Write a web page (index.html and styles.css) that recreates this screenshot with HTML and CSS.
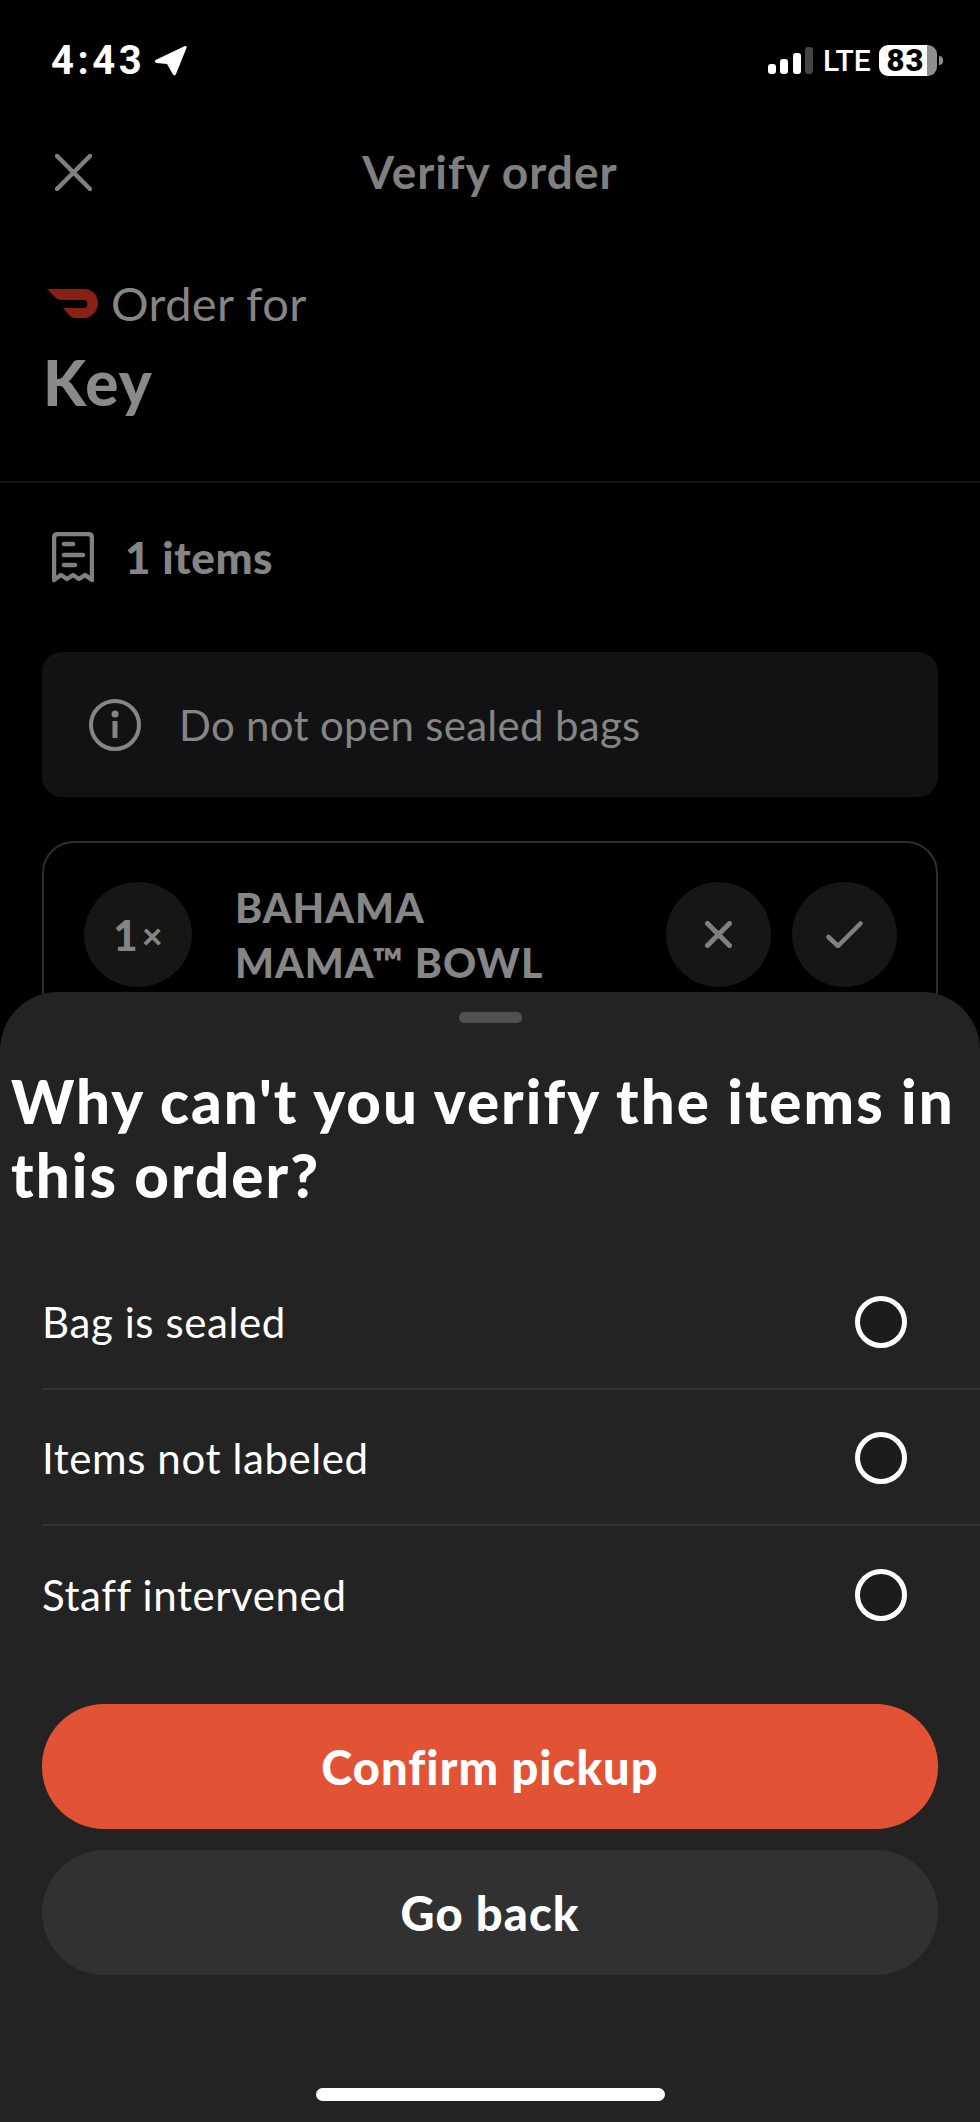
FILE: index.html
```html
<!DOCTYPE html>
<html lang="en">
<head>
    <meta charset="UTF-8">
    <meta name="viewport" content="width=device-width, initial-scale=1.0">
    <title>Verify order</title>
    <link rel="stylesheet" href="styles.css">
</head>
<body>
    <div class="screen">
        <div class="status-bar">
            <div class="status-left">
                <span class="time">4:43</span>
                <svg class="location" width="33" height="31" viewBox="0 0 33 31"><path d="M31 1 1.500 15Q0 17 2.500 18L13 19 19 29.500Q21 31.500 22 29L32.500 3Q33 .5 31 1Z" fill="#fff"/></svg>
            </div>
            <div class="status-right">
                <svg width="45" height="27" viewBox="0 0 45 27">
                    <rect x="0" y="17" width="8" height="10" rx="3" fill="#fff"/>
                    <rect x="12" y="12" width="8" height="15" rx="3" fill="#fff"/>
                    <rect x="25" y="6" width="8" height="21" rx="3" fill="#fff"/>
                    <rect x="37" y="0" width="8" height="27" rx="3" fill="#444"/>
                </svg>
                <span class="network">LTE</span>
                <div class="battery"><span>83</span></div>
                <div class="battery-nub"></div>
            </div>
        </div>

        <div class="nav">
            <svg class="nav-close" width="37" height="37" viewBox="0 0 37 37"><path d="M2 2 35 35M35 2 2 35" stroke="#808080" stroke-width="4.500" stroke-linecap="round"/></svg>
            <h1>Verify order</h1>
        </div>

        <div class="order-for">
            <div class="order-for-line">
                <svg width="51" height="30" viewBox="0 0 51 30"><path d="M0 1H37C45 1 51 7 51 15C51 23 45 30 37 30H27Q24 30 22 27L16 20H38C41 20 41 12 38 12H14Q11 12 9 10Z" fill="#8a2014"/></svg>
                <span>Order for</span>
            </div>
            <div class="customer">Key</div>
        </div>

        <div class="items">
            <div class="items-head">
                <svg width="42" height="51" viewBox="0 0 42 51" fill="none" stroke="#808080" stroke-width="4.500" stroke-linecap="round" stroke-linejoin="round">
                    <path d="M2 48V6Q2 2 6 2H36Q40 2 40 6V48L33 43 27 47 21 43 15 47 9 43Z"/>
                    <path d="M12 12H21M12 23H31M12 33H23"/>
                </svg>
                <span>1 items</span>
            </div>

            <div class="notice">
                <svg width="52" height="52" viewBox="0 0 52 52" fill="none" stroke="#858585">
                    <circle cx="26" cy="26" r="24" stroke-width="4"/>
                    <path d="M26 22V39" stroke-width="5"/>
                    <circle cx="26" cy="15" r="3.500" fill="#858585" stroke="none"/>
                </svg>
                <span>Do not open sealed bags</span>
            </div>

            <div class="item-card">
                <div class="round-btn qty"><span class="qty-num">1</span><span class="qty-x">×</span></div>
                <div class="item-name">BAHAMA<br>MAMA™ BOWL</div>
                <div class="round-btn">
                    <svg width="27" height="27" viewBox="0 0 27 27"><path d="M2.500 2.500 24.500 24.500M24.500 2.500 2.500 24.500" stroke="#808080" stroke-width="5" stroke-linecap="round"/></svg>
                </div>
                <div class="round-btn">
                    <svg width="37" height="27" viewBox="0 0 37 27" fill="none"><path d="M2.500 16 12 25 34.500 2.500" stroke="#808080" stroke-width="4.500" stroke-linecap="round" stroke-linejoin="round"/></svg>
                </div>
            </div>
        </div>

        <!-- bottom sheet lies over the page -->
        <div class="sheet">
            <div class="sheet-handle"></div>
            <h2>Why can't you verify the items in this order?</h2>
            <div class="reasons">
                <div class="reason">
                    <span>Bag is sealed</span>
                    <div class="radio"></div>
                </div>
                <div class="reason">
                    <span>Items not labeled</span>
                    <div class="radio"></div>
                </div>
                <div class="reason">
                    <span>Staff intervened</span>
                    <div class="radio"></div>
                </div>
            </div>
            <div class="actions">
                <button class="btn btn-primary" type="button">Confirm pickup</button>
                <button class="btn btn-secondary" type="button">Go back</button>
            </div>
            <div class="home-indicator"></div>
        </div>
    </div>
</body>
</html>
```

FILE: styles.css
```css
/* Reset some default browser styles */
* {
    margin: 0;
    padding: 0;
    box-sizing: border-box;
}

body {
    background: #000;
    font-family: 'Lato', 'Liberation Sans', sans-serif;
}

.screen {
    position: relative;
    width: 980px;
    height: 2122px;
    overflow: hidden;
    background: #000;
}

/* Status bar */
.status-bar {
    display: flex;
    justify-content: space-between;
    align-items: center;
    height: 120px;
    padding: 0 37px 0 51px;
}

.status-left {
    display: flex;
    align-items: center;
    gap: 9px;
}

.time {
    font-family: 'Roboto', sans-serif;
    font-size: 40px;
    font-weight: 700;
    letter-spacing: 3.500px;
    color: #fff;
}

.status-right {
    display: flex;
    align-items: center;
}

.network {
    width: 46px;
    margin: 0 10px;
    font-family: 'Roboto', sans-serif;
    font-size: 30px;
    font-weight: 500;
    color: #fff;
}

.battery {
    width: 58px;
    height: 31px;
    border-radius: 9px;
    background: linear-gradient(90deg, #fff 83%, #8e8e8e 83%);
    text-align: center;
    line-height: 31px;
    font-family: 'Roboto', sans-serif;
    font-size: 31px;
    font-weight: 900;
    letter-spacing: 1px;
    color: #000;
}

.battery span {
    display: block;
    padding-right: 5px;
}

.battery-nub {
    width: 4px;
    height: 9px;
    margin-left: 2px;
    border-radius: 0 4px 4px 0;
    background: #8e8e8e;
}

/* Title row */
.nav {
    position: relative;
    display: flex;
    justify-content: center;
    align-items: center;
    height: 104px;
    padding-bottom: 2px;
}

.nav h1 {
    font-size: 46px;
    font-weight: 700;
    letter-spacing: 1px;
    color: #808080;
}

.nav-close {
    position: absolute;
    left: 55px;
    top: 34px;
}

/* Order for */
.order-for {
    height: 259px;
    padding: 51px 43px 0;
    border-bottom: 2px solid #141414;
}

.order-for-line {
    display: flex;
    align-items: center;
    gap: 13px;
    padding-left: 4px;
    font-size: 47px;
    letter-spacing: .4px;
    color: #858585;
}

.customer {
    margin-top: 14px;
    font-size: 62px;
    font-weight: 900;
    letter-spacing: 1.300px;
    color: #8a8a8a;
}

/* Item list */
.items {
    padding: 48px 42px 0;
}

.items-head {
    display: flex;
    align-items: center;
    gap: 31px;
    padding-left: 10px;
    font-size: 44px;
    font-weight: 900;
    letter-spacing: .6px;
    color: #858585;
}

.notice {
    display: flex;
    align-items: center;
    gap: 38px;
    height: 145px;
    margin-top: 69px;
    padding-left: 47px;
    border-radius: 20px;
    background: #121214;
    font-size: 42px;
    letter-spacing: .3px;
    color: #858585;
}

.item-card {
    display: flex;
    align-items: flex-start;
    gap: 21px;
    height: 300px;
    margin-top: 44px;
    padding: 39px 39px 0 40px;
    border: 2px solid #2e2e2e;
    border-radius: 32px;
}

.round-btn {
    display: flex;
    justify-content: center;
    align-items: center;
    flex-shrink: 0;
    width: 105px;
    height: 105px;
    border-radius: 50%;
    background: #161615;
    color: #858585;
    font-weight: 900;
}

.qty {
    gap: 4px;
    width: 108px;
}

.qty-num {
    font-size: 42px;
}

.qty-x {
    font-size: 36px;
}

.item-name {
    flex: 1;
    margin: -2px 0 0 22px;
    font-size: 41px;
    font-weight: 900;
    line-height: 55px;
    letter-spacing: 1px;
    color: #868686;
}

/* Bottom sheet */
.sheet {
    position: absolute;
    top: 992px;
    left: 0;
    right: 0;
    bottom: 0;
    display: flex;
    flex-direction: column;
    border-radius: 58px 58px 0 0;
    background: #232323;
}

.sheet-handle {
    width: 63px;
    height: 11px;
    margin: 20px auto 0;
    border-radius: 5px;
    background: #505050;
}

.sheet h2 {
    margin-top: 41px;
    padding: 0 11px;
    font-size: 60px;
    font-weight: 900;
    line-height: 74px;
    letter-spacing: 2.050px;
    color: #fff;
}

.reasons {
    margin-top: 42px;
}

.reason {
    display: flex;
    justify-content: space-between;
    align-items: center;
    height: 136px;
    margin-left: 42px;
    padding: 2px 73px 0 0;
    border-bottom: 2px solid #333;
    font-size: 42px;
    letter-spacing: .6px;
    color: #fff;
}

.reason:last-child {
    border-bottom: none;
}

.radio {
    width: 52px;
    height: 52px;
    border: 5px solid #fff;
    border-radius: 50%;
    background: #1c1c1c;
}

/* Buttons */
.actions {
    display: flex;
    flex-direction: column;
    gap: 21px;
    margin-top: 42px;
    padding: 0 42px;
}

.btn {
    height: 125px;
    border: none;
    border-radius: 62px;
    font-family: inherit;
    font-size: 47px;
    font-weight: 900;
    letter-spacing: 1.070px;
    color: #fff;
    cursor: pointer;
}

.btn-primary {
    background: #e25335;
}

.btn-secondary {
    background: #313131;
}

.home-indicator {
    width: 349px;
    height: 13px;
    margin: 113px auto 0;
    border-radius: 7px;
    background: #fff;
}
```
